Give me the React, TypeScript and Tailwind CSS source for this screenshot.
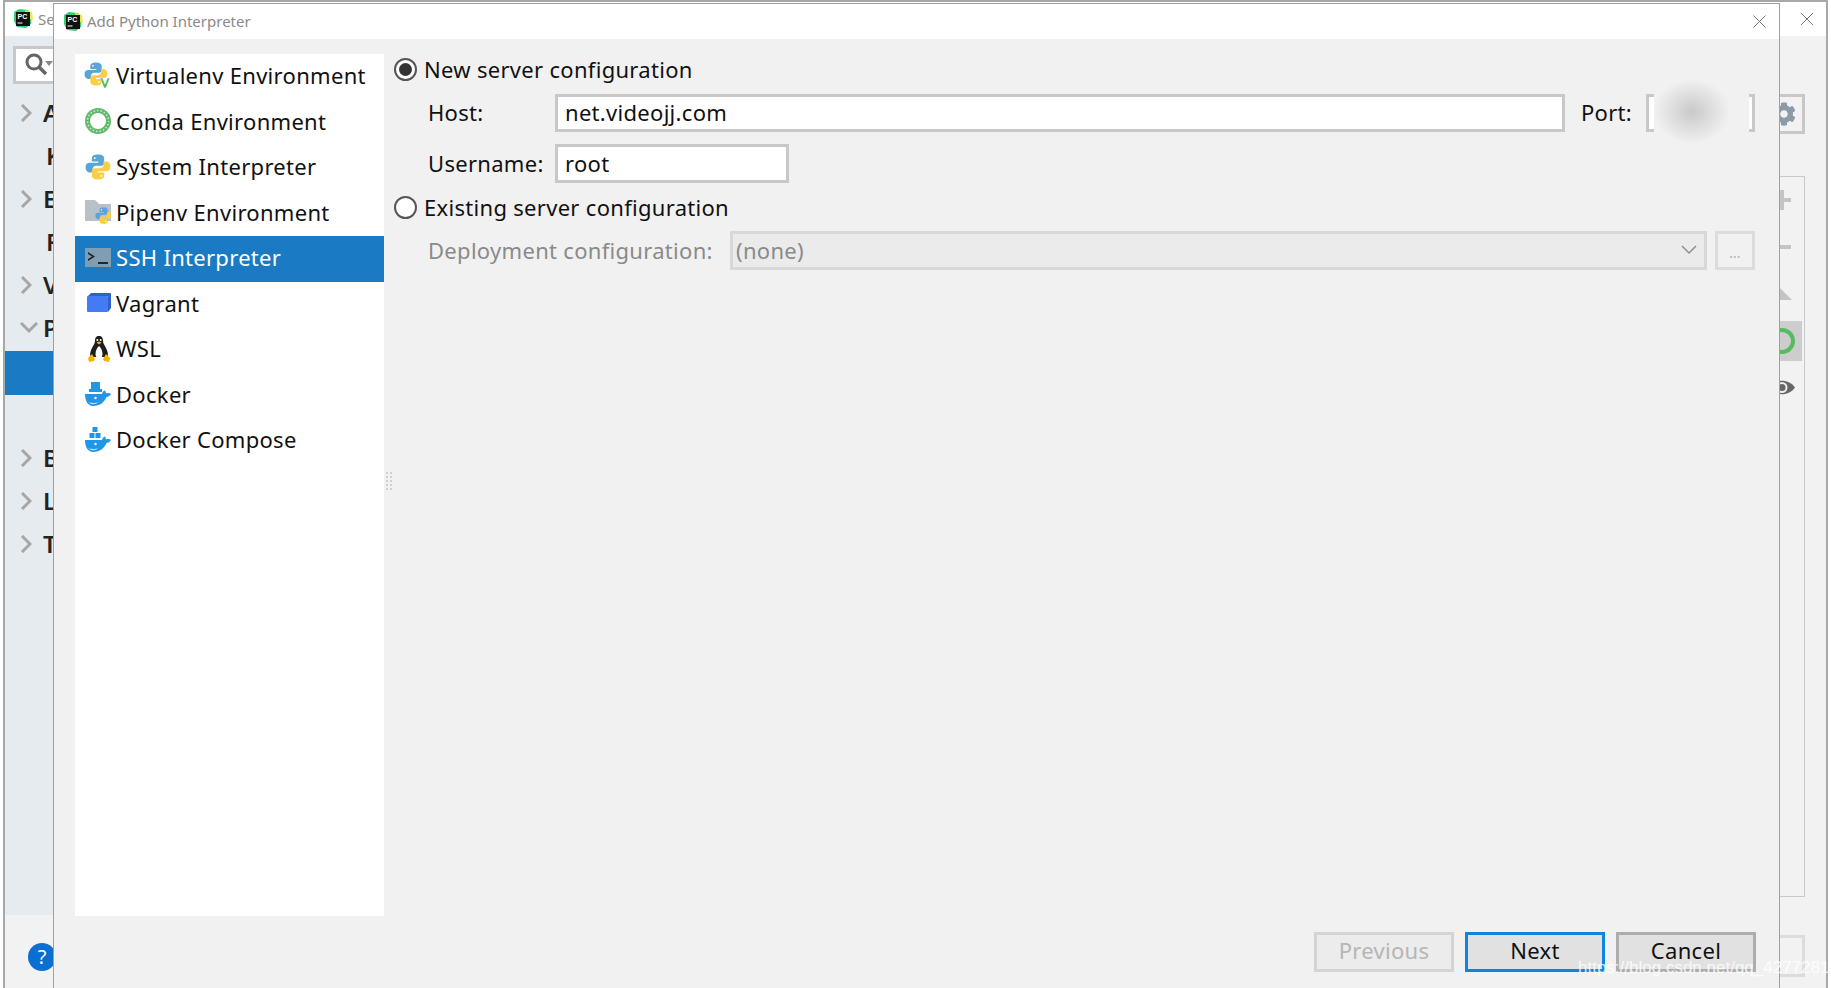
import type { ReactNode } from "react";
import { FaCog } from "react-icons/fa";

function PyShapes() {
  const d =
    "M12 .5C8 .5 6.3 1.8 6.3 4.2V7h6v1H4.200C1.800 8 .5 9.800 .5 12.300S1.800 17 4.200 17H7v-3c0-2 1.500-3.200 3.500-3.200H15c1.500 0 2.700-1.200 2.700-2.800V4.200C17.700 1.800 15.500 .5 12 .5z";
  return (
    <>
      <path d={d} fill="#5aa5d8" />
      <circle cx="9" cy="3.800" r="0.900" fill="#fff" />
      <g transform="rotate(180 12 12)">
        <path d={d} fill="#fbcf45" />
        <circle cx="9" cy="3.800" r="0.900" fill="#fff" />
      </g>
    </>
  );
}

function VirtualenvIcon() {
  return (
    <svg width="27" height="28" viewBox="0 0 27 28">
      <PyShapes />
      <path d="M16 16l4 10h2l4-10h-2.600l-2.400 6-2.400-6z" fill="#5cb85c" stroke="#fff" strokeWidth="0.500" />
    </svg>
  );
}

function CondaIcon() {
  return (
    <svg width="26" height="26" viewBox="0 0 26 26">
      <circle cx="13" cy="13" r="10.500" fill="none" stroke="#62b96b" strokeWidth="5" />
      <circle cx="13" cy="13" r="10.500" fill="none" stroke="#cfe9d1" strokeWidth="1.500" strokeDasharray="1.500 2" pathLength="66" strokeDashoffset="-38" />
    </svg>
  );
}

function PythonIcon() {
  return (
    <svg width="26" height="26" viewBox="0 0 24 24">
      <PyShapes />
    </svg>
  );
}

function PipenvIcon() {
  return (
    <svg width="26" height="26" viewBox="0 0 26 26">
      <path d="M0 1h10l4 4h12v17H0z" fill="#b9c0c8" />
      <g transform="translate(10 8) scale(0.72)">
        <PyShapes />
      </g>
    </svg>
  );
}

function SshIcon() {
  return (
    <svg width="26" height="20" viewBox="0 0 26 20">
      <rect width="26" height="19" fill="#7f9db3" />
      <path d="M3 4l7 4.500-7 4.500V11l4-2.500L3 6z" fill="#20262b" />
      <rect x="13" y="14" width="10" height="2" fill="#20262b" />
    </svg>
  );
}

function VagrantIcon() {
  return (
    <svg width="24" height="20" viewBox="0 0 24 20">
      <path d="M4 0h20l-2 3H1z" fill="#2f62c9" />
      <path d="M24 0v15l-3 4V3z" fill="#2f62c9" />
      <rect x="0" y="3" width="21" height="16" rx="1" fill="#437bf2" />
    </svg>
  );
}

function PenguinIcon() {
  return (
    <svg width="24" height="28" viewBox="0 0 24 28">
      <path d="M12 1C9 1 8 3 8 6c0 2.500-1.500 4-3 7-1.500 3-2.500 6-1.500 9h17c1-3 0-6-1.500-9-1.500-3-3-4.500-3-7 0-3-1-5-4-5z" fill="#1d1d1d" />
      <path d="M12 11c-1.800 1.500-3.500 4.500-3.500 8 0 2.500 1 4 3.500 4s3.500-1.500 3.500-4c0-3.500-1.700-6.500-3.500-8z" fill="#fff" />
      <circle cx="10.300" cy="5" r="1" fill="#fff" />
      <circle cx="13.700" cy="5" r="1" fill="#fff" />
      <path d="M9.500 7.500l2.500-1 2.500 1-2.500 2z" fill="#f4b400" />
      <path d="M1 23l4-4 3 5-1 2-5 1zM23 23l-4-4-3 5 1 2 5 1z" fill="#f4b400" />
    </svg>
  );
}

function DockerIcon({ compose }: { compose?: boolean }) {
  return (
    <svg width="26" height="26" viewBox="0 0 26 26">
      {compose ? (
        <>
          <rect x="7.500" y="0" width="5" height="5" fill="#1f97e8" />
          <rect x="4.500" y="6" width="5" height="5" fill="#1f97e8" />
          <rect x="10.500" y="6" width="5" height="5" fill="#1f97e8" />
        </>
      ) : (
        <>
          <rect x="6" y="1" width="9" height="9" fill="#1f97e8" />
          <rect x="4" y="8" width="13" height="3" fill="#1f97e8" />
        </>
      )}
      <path d="M0 13h17c.5-2 2-3.500 3-3.500 .5 1 1 2 1 3 2-.8 4-.5 5 .5-1 2-3 3-4.500 3C19.500 21 15 25 8 25 3 25 0 20 0 13z" fill="#1f97e8" />
      <circle cx="10.500" cy="17" r="1.200" fill="#fff" />
      <path d="M3 21c2 1 7 1.500 10 0-2 3-7 3-10 0z" fill="#bfe3fa" />
    </svg>
  );
}

function PcLogo() {
  return (
    <svg width="20" height="20" viewBox="0 0 20 20" className="shrink-0">
      <path d="M1 3l5-3 9 1 4 5-1 9-5 4-9-1-3-6z" fill="#2fd07a" />
      <path d="M12 1l7 2 1 8-6-2z" fill="#f1e64b" />
      <rect x="3" y="3" width="14" height="14" fill="#111" />
      <text x="4.500" y="10" fontSize="7" fontWeight="700" fill="#fff" fontFamily="Liberation Sans, sans-serif">PC</text>
      <rect x="4.500" y="13.500" width="5" height="1" fill="#fff" />
    </svg>
  );
}

function Chevron({ down }: { down?: boolean }) {
  return (
    <svg width={down ? 18 : 12} height={down ? 12 : 18} viewBox={down ? "0 0 18 12" : "0 0 12 18"} className="shrink-0">
      <path
        d={down ? "M1 1l8 8 8-8" : "M2 1l8 8-8 8"}
        fill="none"
        stroke="#a6a6a6"
        strokeWidth="3"
      />
    </svg>
  );
}

function TreeRow({ letter, arrow, down, indent }: { letter: string; arrow?: boolean; down?: boolean; indent?: boolean }) {
  return (
    <div className="flex h-[43px] items-center overflow-hidden pl-[15px]">
      <div className="w-[18px] shrink-0">{arrow && <Chevron down={down} />}</div>
      <span className={`text-[24px] font-semibold text-[#222] ${indent ? "ml-[8px]" : "ml-[5px]"}`}>{letter}</span>
    </div>
  );
}

const ITEMS: { label: string; icon: ReactNode; active?: boolean }[] = [
  { label: "Virtualenv Environment", icon: <VirtualenvIcon /> },
  { label: "Conda Environment", icon: <CondaIcon /> },
  { label: "System Interpreter", icon: <PythonIcon /> },
  { label: "Pipenv Environment", icon: <PipenvIcon /> },
  { label: "SSH Interpreter", icon: <SshIcon />, active: true },
  { label: "Vagrant", icon: <VagrantIcon /> },
  { label: "WSL", icon: <PenguinIcon /> },
  { label: "Docker", icon: <DockerIcon /> },
  { label: "Docker Compose", icon: <DockerIcon compose /> },
];

function Radio({ checked, label }: { checked?: boolean; label: string }) {
  return (
    <div className="flex items-center gap-[7px]">
      <div className="flex h-[23px] w-[23px] items-center justify-center rounded-full border-2 border-[#555] bg-white">
        {checked && <div className="h-[13px] w-[13px] rounded-full bg-[#333]" />}
      </div>
      <span className="pb-[1px] text-[22px] leading-[30px] tracking-[0.3px] text-[#111]">{label}</span>
    </div>
  );
}

function FooterButton({ label, kind }: { label: string; kind: "off" | "primary" | "normal" }) {
  const cls = {
    off: "border-[#d4d4d4] bg-[#ececec] text-[#b5b5b5]",
    primary: "border-[#0d84e0] bg-[#e1e1e1] text-[#111]",
    normal: "border-[#adadad] bg-[#e1e1e1] text-[#111]",
  }[kind];
  return (
    <div className={`flex h-[40px] w-[140px] items-center justify-center border-[3px] pb-[3px] text-[22px] tracking-[0.3px] ${cls}`}>{label}</div>
  );
}

export default function App() {
  return (
    <div
      className="relative h-[988px] w-[1831px] overflow-hidden bg-white"
      style={{ fontFamily: '"Noto Sans", sans-serif' }}
    >
      {/* settings window behind the dialog */}
      <div className="absolute top-0 left-[3px] flex h-[988px] w-[1825px] flex-col border-t-2 border-r-2 border-l-2 border-[#a8a8a8] bg-[#f2f2f2]">
        <div className="flex h-[34px] shrink-0 items-center gap-[5px] bg-white pl-[8px]">
          <PcLogo />
          <span className="text-[15px] text-[#8a8a8a]">Se</span>
        </div>
        <div className="flex min-h-0 flex-1">
          <div className="flex h-[879px] w-[48px] shrink-0 flex-col bg-[#e6ebf0]">
            <div className="mt-[10px] ml-[8px] flex h-[38px] w-[60px] shrink-0 items-center border-[3px] border-[#c8c8c8] bg-white pl-[8px]">
              <svg width="30" height="26" viewBox="0 0 30 26" className="shrink-0">
                <circle cx="10" cy="10" r="7" fill="none" stroke="#666" strokeWidth="3" />
                <path d="M15 15l7 7" stroke="#666" strokeWidth="3.500" />
                <path d="M21 9h8l-4 5z" fill="#888" />
              </svg>
            </div>
            <div className="mt-[7px] flex flex-col">
              <TreeRow letter="A" arrow />
              <TreeRow letter="K" indent />
              <TreeRow letter="E" arrow />
              <TreeRow letter="F" indent />
              <TreeRow letter="V" arrow />
              <TreeRow letter="P" arrow down />
              <div className="mt-[2px] h-[44px] bg-[#1a7bc4]" />
              <div className="h-[41px]" />
              <TreeRow letter="B" arrow />
              <TreeRow letter="L" arrow />
              <TreeRow letter="T" arrow />
            </div>
          </div>
          <div className="flex-1" />
          <div className="mt-[58px] mr-[21px] flex w-[30px] flex-col items-end">
            <div className="flex h-[40px] w-[28px] shrink-0 items-center justify-end border-[3px] border-[#c8c8c8] pr-[6px]">
              <FaCog size={24} color="#8b9ba8" className="shrink-0" />
            </div>
            <div className="mt-[42px] flex h-[721px] w-[30px] shrink-0 flex-col items-end border-t border-r border-b border-[#c9c9c9] pr-[13px]">
              <svg width="18" height="20" viewBox="0 0 18 20" className="mt-[13px] shrink-0">
                <path d="M0 8h18v4H0zM7 0h4v20H7z" fill="#c4c4c4" />
              </svg>
              <div className="mt-[35px] h-[4px] w-[12px] shrink-0 bg-[#c4c4c4]" />
              <div className="mt-[39px] mr-[-1px] h-0 w-0 shrink-0 border-r-[12px] border-b-[12px] border-l-[12px] border-r-transparent border-b-[#c4c4c4] border-l-transparent" />
              <div className="mt-[21px] mr-[-11px] flex h-[40px] w-[24px] shrink-0 items-center justify-end bg-[#cdcdcd] pr-[7px]">
                <div className="h-[26px] w-[26px] shrink-0 rounded-full border-[4px] border-[#55bb60]" />
              </div>
              <svg width="26" height="19" viewBox="0 0 26 19" className="mt-[17px] mr-[-4px] shrink-0">
                <path d="M0 9.500c6-9 20-9 26 0-6 9-20 9-26 0z" fill="#666" />
                <circle cx="13" cy="9.500" r="5.500" fill="#eee" />
                <circle cx="13" cy="9.500" r="3.500" fill="#666" />
              </svg>
            </div>
            <div className="mt-[38px] h-[42px] w-[30px] shrink-0 border-[3px] border-l-0 border-[#dcdcdc]" />
          </div>
        </div>
      </div>

      {/* close of the settings window */}
      <svg width="14" height="14" viewBox="0 0 14 14" className="absolute top-[12px] left-[1800px]">
        <path d="M1 1l12 12M13 1L1 13" stroke="#777" strokeWidth="1" />
      </svg>

      {/* help button, partly covered by the dialog */}
      <div className="absolute top-[943px] left-[28px] flex h-[28px] w-[28px] items-center justify-center rounded-full bg-[#0b6fd1] text-[20px] text-white">
        ?
      </div>

      {/* Add Python Interpreter dialog */}
      <div className="absolute top-[3px] left-[53px] flex h-[985px] w-[1727px] flex-col border-t border-r border-l border-[#a0a0a0] bg-[#f1f1f1]">
        <div className="flex h-[35px] shrink-0 items-center bg-white pl-[9px]">
          <PcLogo />
          <span className="ml-[4px] pb-[1px] text-[15px] text-[#8a8a8a]">Add Python Interpreter</span>
          <svg width="13" height="13" viewBox="0 0 13 13" className="mr-[13px] ml-auto">
            <path d="M.5.5l12 12M12.500.5l-12 12" stroke="#777" strokeWidth="1" />
          </svg>
        </div>
        <div className="flex min-h-0 flex-1">
          <div className="mt-[15px] ml-[21px] flex h-[862px] w-[309px] shrink-0 flex-col bg-white">
            {ITEMS.map((item) => (
              <div
                key={item.label}
                className={`flex h-[45.5px] shrink-0 items-center pb-[2px] ${item.active ? "bg-[#1a7bc4] text-white" : "text-[#111]"}`}
              >
                <div className="flex w-[41px] justify-end pr-[5px]">{item.icon}</div>
                <span className="text-[22px] tracking-[0.3px]">{item.label}</span>
              </div>
            ))}
          </div>
          <div className="flex w-[10px] items-start justify-center pt-[433px]">
            <div className="grid grid-cols-2 gap-[2px]">
              {Array.from({ length: 10 }).map((_, i) => (
                <div key={i} className="h-[2px] w-[2px] bg-[#cfcfcf]" />
              ))}
            </div>
          </div>
          <div className="flex min-w-0 flex-1 flex-col pt-[15px] pr-[23px]">
            <Radio checked label="New server configuration" />
            <div className="mt-[9px] flex h-[38px] items-center pl-[34px]">
              <span className="w-[127px] pb-[1px] text-[22px] tracking-[0.3px] text-[#111]">Host:</span>
              <div className="flex h-[38px] w-[1010px] items-center border-[3px] border-[#c8c8c8] bg-white pb-[1px] pl-[7px] text-[22px] tracking-[0.3px] text-[#111]">net.videojj.com</div>
              <span className="ml-[16px] w-[65px] pb-[1px] text-[22px] tracking-[0.3px] text-[#111]">Port:</span>
              <div className="relative h-[38px] w-[109px] border-[3px] border-[#c8c8c8] bg-white">
                <div className="absolute top-[-18px] left-[5px] h-[65px] w-[95px] bg-[radial-gradient(closest-side_at_40%_50%,#c9c9c9,#f1f1f1)]" />
              </div>
            </div>
            <div className="mt-[12px] flex h-[39px] items-center pl-[34px]">
              <span className="w-[127px] pb-[1px] text-[22px] tracking-[0.3px] text-[#111]">Username:</span>
              <div className="flex h-[39px] w-[234px] items-center border-[3px] border-[#c8c8c8] bg-white pb-[1px] pl-[7px] text-[22px] tracking-[0.3px] text-[#111]">root</div>
            </div>
            <div className="mt-[9px]">
              <Radio label="Existing server configuration" />
            </div>
            <div className="mt-[8px] flex h-[39px] items-center pl-[34px]">
              <span className="w-[302px] pb-[1px] text-[22px] tracking-[0.3px] text-[#8a8a8a]">Deployment configuration:</span>
              <div className="flex h-[39px] w-[977px] items-center border-[3px] border-[#d8d8d8] bg-[#ebebeb] pb-[1px] pl-[3px] text-[22px] tracking-[0.3px] text-[#8a8a8a]">
                (none)
                <svg width="16" height="10" viewBox="0 0 16 10" className="mr-[7px] ml-auto">
                  <path d="M1 1l7 7 7-7" fill="none" stroke="#8f8f8f" strokeWidth="1.500" />
                </svg>
              </div>
              <div className="ml-[8px] flex h-[39px] w-[40px] items-center justify-center border-[3px] border-[#dcdcdc] pt-[4px] text-[14px] text-[#b0b0b0]">...</div>
            </div>
            <div className="mt-auto mb-[16px] flex justify-end gap-[11px]">
              <FooterButton label="Previous" kind="off" />
              <FooterButton label="Next" kind="primary" />
              <FooterButton label="Cancel" kind="normal" />
            </div>
          </div>
        </div>
      </div>

      {/* watermark */}
      <div className="absolute top-[959px] left-[1578px] text-[17px] leading-[18px] text-white/80" style={{ fontFamily: '"Liberation Sans", sans-serif' }}>
        https://blog.csdn.net/qq_42772812
      </div>
    </div>
  );
}
